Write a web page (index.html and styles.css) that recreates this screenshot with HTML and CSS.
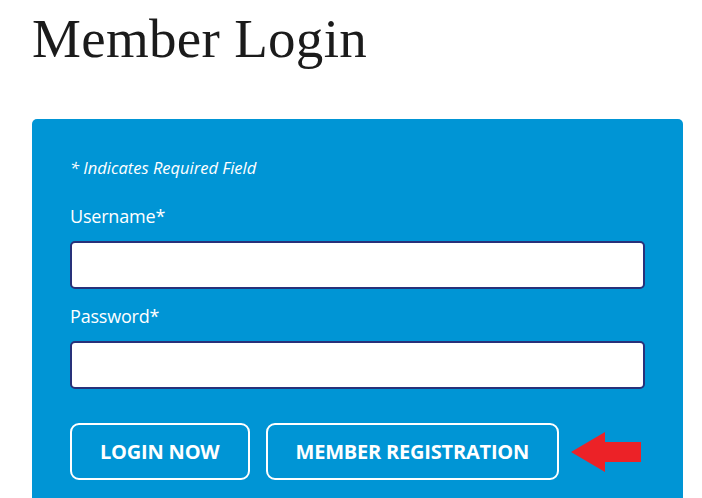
FILE: index.html
```html
<!DOCTYPE html>
<html lang="en">
  <head>
    <meta charset="UTF-8" />
    <meta name="viewport" content="width=device-width, initial-scale=1" />
    <title>Member Login</title>
    <link rel="stylesheet" href="styles.css">
  </head>
  <body>
    <div class="page">
      <h1>Member Login</h1>
      <div class="login-box">
        <p class="required-note">* Indicates Required Field</p>
        <form class="login-form" autocomplete="off">
          <label for="username">Username*</label>
          <input type="text" id="username" required />
          <label for="password">Password*</label>
          <input type="password" id="password" required />
          <div class="actions">
            <button type="submit" class="btn">Login Now</button>
            <a href="#" class="btn">Member Registration</a>
            <svg class="arrow" width="70" height="40" viewBox="0 0 70 40">
              <polygon points="0,20 34,0 34,10 70,10 70,30 34,30 34,40" fill="#ec2227" />
            </svg>
          </div>
        </form>
      </div>
    </div>
  </body>
</html>
```

FILE: styles.css
```css
:root {
  --blue: #0095d5;
  --navy: #28317a;
  --text: #1b1b1b;
}
body {
  margin: 0;
  background: #fff;
  color: var(--text);
  font-family: "Open Sans", Arial, sans-serif;
}
.page {
  padding-left: 32px;
  width: 651px;
}
h1 {
  font-family: "Liberation Serif", "Times New Roman", serif;
  font-weight: 400;
  font-size: 55px;
  line-height: 66px;
  margin: 6px 0 0 0;
  letter-spacing: 0.3px;
}
.login-box {
  margin-top: 47px;
  background: var(--blue);
  border-radius: 5px 5px 0 0;
  padding: 36px 38px 30px 38px;
  color: #fff;
}
.required-note {
  margin: 0;
  font-style: italic;
  font-size: 16.5px;
  line-height: 25px;
}
.login-form {
  display: flex;
  flex-direction: column;
  margin-top: 23px;
}
label {
  font-size: 18px;
  line-height: 27px;
  margin-bottom: 11px;
  letter-spacing: -0.2px;
}
input[type="text"],
input[type="password"] {
  height: 48px;
  box-sizing: border-box;
  border: 2px solid var(--navy);
  border-radius: 5px;
  background: #fff;
  font-size: 16px;
  padding: 0 12px;
  margin-bottom: 14px;
  outline: none;
}
.actions {
  display: flex;
  align-items: center;
  gap: 16px;
  margin-top: 20px;
}
.btn {
  display: inline-flex;
  align-items: center;
  justify-content: center;
  flex-shrink: 0;
  white-space: nowrap;
  height: 57px;
  box-sizing: border-box;
  padding: 0 28px;
  border: 2px solid #fff;
  border-radius: 9px;
  background: transparent;
  color: #fff;
  font-family: "Open Sans", Arial, sans-serif;
  font-weight: 700;
  font-size: 20px;
  text-transform: uppercase;
  text-decoration: none;
  letter-spacing: -0.2px;
  cursor: pointer;
}
.arrow {
  flex-shrink: 0;
  margin-left: -4px;
}
```
